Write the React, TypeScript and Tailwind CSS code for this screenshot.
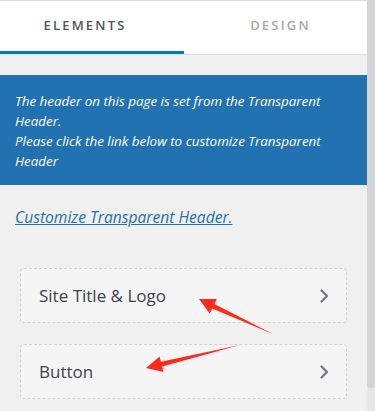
const arrows = [
  // tail, shaft edges near head, barbs, tip
  "273,334 214.4,304 216.9,299 199,299 209.7,313.4 212.2,308.4",
  "240,345 160.9,361.8 159.6,356.4 146,368 163.4,372 162.1,366.6",
];

function Chevron() {
  return (
    <svg width="10" height="14" viewBox="0 0 10 14" aria-hidden="true">
      <path
        d="M2.5 1.5 L8 7 L2.5 12.5"
        fill="none"
        stroke="#6b7789"
        strokeWidth="2.2"
        strokeLinecap="round"
        strokeLinejoin="round"
      />
    </svg>
  );
}

function Item({ label }: { label: string }) {
  return (
    <button className="flex h-[55px] w-full items-center justify-between rounded-[4px] border border-dashed border-[#d0d1d8] bg-[#f5f5f5] pl-[18px] pr-[17px] text-left">
      <span className="text-[17px] text-[#3c434a]">{label}</span>
      <Chevron />
    </button>
  );
}

export default function App() {
  return (
    <div
      className="relative flex h-[411px] w-[375px] overflow-hidden bg-[#f0f0f1]"
      style={{ fontFamily: '"Open Sans", "Noto Sans", sans-serif' }}
    >
      <div className="flex w-[367px] flex-col">
        {/* Tabs */}
        <div className="flex h-[55px] border-t border-b border-[#dcdcde] bg-white">
          <div className="relative flex w-[184px] items-center justify-center pb-[3px] pr-[14px]">
            <span className="text-[13px] font-semibold tracking-[2.2px] text-[#50575e]">
              ELEMENTS
            </span>
            <div className="absolute bottom-0 left-0 h-[3px] w-full bg-[#007cba]" />
          </div>
          <div className="flex flex-1 items-center justify-center pb-[3px] pl-[10px]">
            <span className="text-[13px] font-semibold tracking-[2.2px] text-[#a7aaad]">
              DESIGN
            </span>
          </div>
        </div>

        {/* Notice */}
        <div className="mt-[20px] h-[110px] bg-[#2271b1] pl-[15px] pr-[20px] pt-[16px] text-[13.4px] italic leading-[20px] text-white">
          The header on this page is set from the Transparent Header.
          <br />
          Please click the link below to customize Transparent Header
        </div>

        <a
          href="#"
          className="ml-[15px] mt-[22px] self-start text-[15.6px] italic leading-[20px] text-[#2271b1] underline"
        >
          Customize Transparent Header.
        </a>

        <div className="mt-[41px] flex flex-col gap-[21px] pl-[20px] pr-[20px]">
          <Item label="Site Title & Logo" />
          <Item label="Button" />
        </div>
      </div>

      {/* Scrollbar */}
      <div className="flex w-[8px] flex-col bg-[#e6e6e6]">
        <div className="h-[388px] rounded-b-[3px] bg-[#d4d4d4]" />
      </div>

      {/* Annotation arrows */}
      <svg
        className="pointer-events-none absolute left-0 top-0"
        width="375"
        height="411"
        aria-hidden="true"
      >
        {arrows.map((p) => (
          <polygon key={p} points={p} fill="#fe2a1a" />
        ))}
      </svg>
    </div>
  );
}
